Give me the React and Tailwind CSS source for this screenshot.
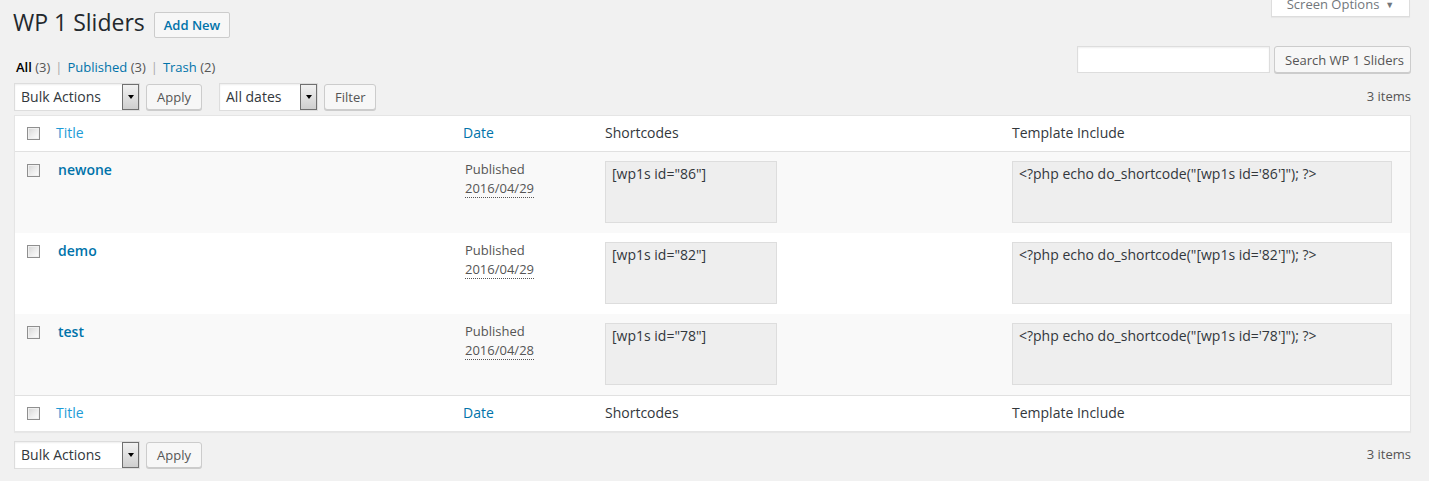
import React from 'react';

const font = { fontFamily: '"Open Sans", "Noto Sans", sans-serif' };

const rows = [
  { id: '86', title: 'newone', date: '2016/04/29', alt: true },
  { id: '82', title: 'demo', date: '2016/04/29', alt: false },
  { id: '78', title: 'test', date: '2016/04/28', alt: true },
];

const Checkbox = () => (
  <span className="block w-[13px] h-[13px] border border-[#8f8f8f] bg-gradient-to-br from-[#d4d4d4] via-[#ececec] to-[#ffffff] shadow-[inset_0_0_0_1px_#f0f0f0]"></span>
);

const Button = ({ children, className = '' }) => (
  <button className={`h-[26px] px-[10px] rounded-[3px] border border-[#cccccc] bg-[#f7f7f7] shadow-[0_1px_0_#cccccc] text-[13px] text-[#555555] leading-[24px] whitespace-nowrap ${className}`}>
    {children}
  </button>
);

const Select = ({ label, width }) => (
  <div className={`flex h-[28px] bg-white border border-[#dddddd] shadow-[inset_0_1px_2px_rgba(0,0,0,0.07)] ${width}`}>
    <span className="flex-1 pl-[6px] text-[14px] leading-[26px] text-[#32373c]">{label}</span>
    <span className="w-[17px] h-[26px] border border-[#707070] bg-gradient-to-b from-[#f2f2f2] to-[#cfcfcf] flex items-center justify-center">
      <span className="w-0 h-0 border-l-[3.5px] border-r-[3.5px] border-t-[4px] border-l-transparent border-r-transparent border-t-black"></span>
    </span>
  </div>
);

const HeadRow = ({ border }) => (
  <div className={`grid grid-cols-[33px_407px_142px_407px_1fr] h-[36px] items-center ${border}`}>
    <div className="pl-[12px]"><Checkbox /></div>
    <div className="pl-[8px] text-[14px] leading-[20px] -mt-[2px] text-[#1e9bd6]">Title</div>
    <div className="pl-[8px] text-[14px] leading-[20px] -mt-[2px] text-[#0073aa]">Date</div>
    <div className="pl-[8px] text-[14px] leading-[20px] -mt-[2px] text-[#32373c]">Shortcodes</div>
    <div className="pl-[8px] text-[14px] leading-[20px] -mt-[2px] text-[#32373c]">Template Include</div>
  </div>
);

const Tablenav = ({ filters }) => (
  <div className="flex items-center h-[28px]">
    <Select label="Bulk Actions" width="w-[126px]" />
    <Button className="ml-[6px] w-[56px]">Apply</Button>
    {filters && (
      <>
        <div className="ml-[17px]"><Select label="All dates" width="w-[99px]" /></div>
        <Button className="ml-[6px] w-[52px]">Filter</Button>
      </>
    )}
    <span className="ml-auto text-[13px] text-[#555555]">3 items</span>
  </div>
);

export default function App() {
  return (
    <div className="min-h-screen w-full bg-[#f1f1f1] pl-[14px] pr-[18px] text-[#444444]" style={font}>
      <div className="flex items-start h-[46px]">
        <h1 className="mt-[8px] -ml-px text-[23px] leading-[29px] text-[#23282d] font-normal">WP 1 Sliders</h1>
        <button className="mt-[12px] ml-[9px] h-[26px] px-[9px] rounded-[2px] border border-[#cccccc] bg-[#f7f7f7] text-[13px] font-semibold text-[#0073aa] leading-[24px]">Add New</button>
        <div className="ml-auto mr-px h-[17px] w-[139px] bg-white border border-t-0 border-[#dddddd] shadow-[0_1px_1px_rgba(0,0,0,0.04)] flex items-center justify-center gap-[6px] text-[13px] text-[#72777c] leading-none">
          <span className="-mt-[7px]">Screen Options</span>
          <span className="-mt-[7px] text-[9px]">▼</span>
        </div>
      </div>

      <div className="flex items-start h-[37px]">
        <div className="mt-[12px] ml-[2px] text-[13px] leading-[18px] text-[#666666]">
          <span className="text-black font-semibold">All</span> <span className="text-[#555555]">(3)</span>
          <span className="text-[#aaaaaa] mx-[5px]">|</span>
          <span className="text-[#0073aa]">Published</span> <span className="text-[#555555]">(3)</span>
          <span className="text-[#aaaaaa] mx-[5px]">|</span>
          <span className="text-[#0073aa]">Trash</span> <span className="text-[#555555]">(2)</span>
        </div>
        <div className="ml-auto flex items-start">
          <div className="w-[193px] h-[27px] bg-white border border-[#dddddd] shadow-[inset_0_1px_2px_rgba(0,0,0,0.07)]"></div>
          <Button className="ml-[4px] h-[27px] w-[137px] px-0">Search WP 1 Sliders</Button>
        </div>
      </div>

      <Tablenav filters />

      <div className="mt-[4px] bg-white border border-[#e5e5e5] shadow-[0_1px_1px_rgba(0,0,0,0.04)]">
        <HeadRow border="border-b border-[#e1e1e1]" />
        {rows.map((r) => (
          <div key={r.id} className={`grid grid-cols-[33px_407px_142px_407px_1fr] h-[81px] ${r.alt ? 'bg-[#f9f9f9]' : 'bg-white'}`}>
            <div className="pl-[12px] pt-[12px]"><Checkbox /></div>
            <div className="pl-[10px] pt-[8px] text-[14px] leading-[20px] font-semibold text-[#0073aa]">{r.title}</div>
            <div className="pl-[10px] pt-[8px] text-[13px] leading-[19px] text-[#555555]">
              <div>Published</div>
              <span className="border-b border-dotted border-[#555555] leading-[17px] inline-block">{r.date}</span>
            </div>
            <div className="pl-[8px] pt-[9px]">
              <div className="w-[172px] h-[62px] bg-[#eeeeee] border border-[#dddddd] px-[6px] pt-[2px] text-[14px] leading-[20px] text-[#32373c]">
                [wp1s id="{r.id}"]
              </div>
            </div>
            <div className="pl-[8px] pt-[9px]">
              <div className="w-[380px] h-[62px] bg-[#eeeeee] border border-[#dddddd] px-[6px] pt-[2px] text-[14px] leading-[20px] text-[#32373c]">
                {`<?php echo do_shortcode("[wp1s id='${r.id}']"); ?>`}
              </div>
            </div>
          </div>
        ))}
        <HeadRow border="border-t border-[#e1e1e1]" />
      </div>

      <div className="mt-[9px]">
        <Tablenav />
      </div>
    </div>
  );
}
